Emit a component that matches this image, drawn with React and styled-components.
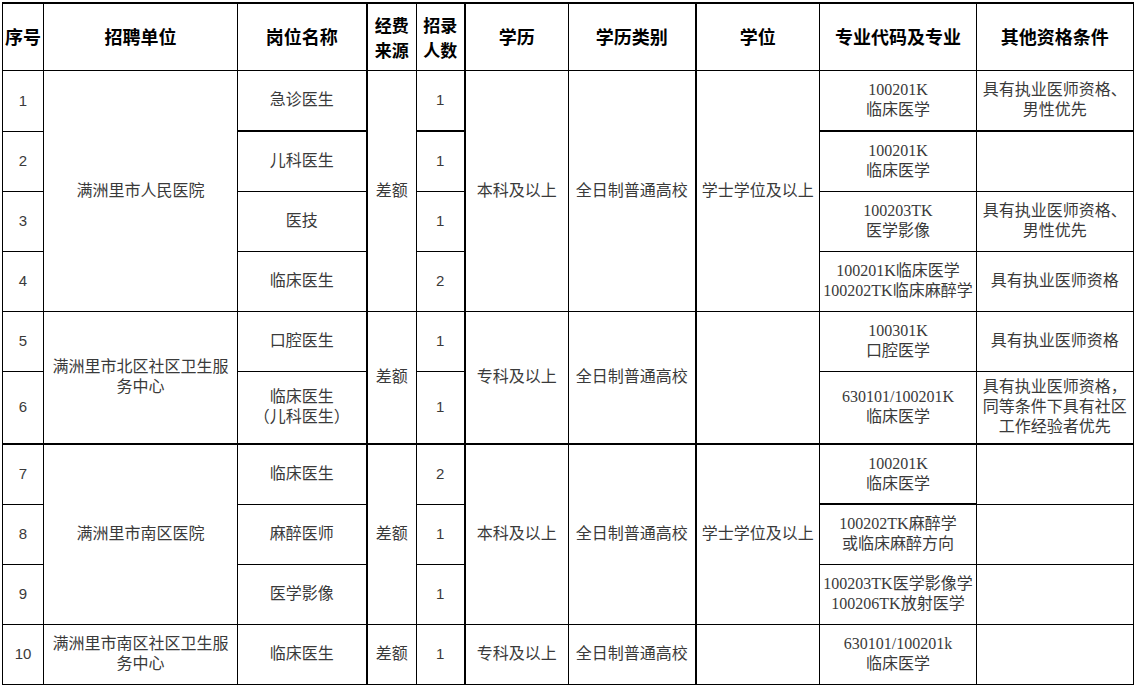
import React from "react";
import styled, { createGlobalStyle } from "styled-components";

const Global = createGlobalStyle`
  html, body { margin: 0; padding: 0; background: #fff; }
  body { font-family: "Noto Sans CJK SC", sans-serif; }
`;

const Page = styled.div`
  padding: 2px 0 0 2px;
  width: 1134px;
  box-sizing: border-box;
`;

const Table = styled.table`
  border-collapse: collapse;
  table-layout: fixed;
  width: 1131px;
  border-top: 2px solid #000;
  border-right: 2px solid #000;
`;

const Row = styled.tr`
  height: ${(p) => p.$h}px;
`;

const cellBase = `
  border: 1px solid #000;
  text-align: center;
  vertical-align: middle;
  padding: 0 2px;
  overflow: hidden;
`;

const Head = styled.th`
  ${cellBase}
  font-family: "Noto Sans CJK SC", sans-serif;
  font-weight: 700;
  font-size: 18px;
  line-height: 21px;
  color: #000;
  ${(p) => p.$tl && "border-left-width: 2px;"}
`;

const HeadStack = styled.div`
  display: flex;
  flex-direction: column;
  align-items: center;
`;

const HeadLine = styled.span`
  display: block;
  height: 25px;
  line-height: 25px;
  font-size: 17px;
`;

const Cell = styled.td`
  ${cellBase}
  font-family: "Liberation Serif", "Noto Sans CJK SC", serif;
  font-size: 16px;
  line-height: 20px;
  color: #3a3a3a;
  ${(p) => p.$tl && "border-left-width: 2px;"}
  ${(p) => p.$tt && "border-top-width: 2px;"}
`;

const NumCell = styled(Cell)`
  font-family: "Liberation Sans", "Noto Sans CJK SC", sans-serif;
  font-size: 15px;
`;

const widths = [41, 194, 129, 50, 48, 104, 127, 124, 157, 157];

const Lines = ({ t }) => {
  const parts = t.split("\n");
  return parts.map((s, i) => (
    <React.Fragment key={i}>
      {s}
      {i < parts.length - 1 && <br />}
    </React.Fragment>
  ));
};

const TwoLineHead = ({ a, b, ...rest }) => (
  <Head {...rest}>
    <HeadStack>
      <HeadLine>{a}</HeadLine>
      <HeadLine>{b}</HeadLine>
    </HeadStack>
  </Head>
);

export default function App() {
  return (
    <>
      <Global />
      <Page>
        <Table>
          <colgroup>
            {widths.map((w, i) => (
              <col key={i} style={{ width: w }} />
            ))}
          </colgroup>
          <thead>
            <Row $h={67}>
              <Head>序号</Head>
              <Head>招聘单位</Head>
              <Head>岗位名称</Head>
              <TwoLineHead $tl a="经费" b="来源" />
              <TwoLineHead a="招录" b="人数" />
              <Head $tl>学历</Head>
              <Head>学历类别</Head>
              <Head $tl>学位</Head>
              <Head>专业代码及专业</Head>
              <Head>其他资格条件</Head>
            </Row>
          </thead>
          <tbody>
            <Row $h={61}>
              <NumCell>1</NumCell>
              <Cell rowSpan={4}>满洲里市人民医院</Cell>
              <Cell>急诊医生</Cell>
              <Cell rowSpan={4} $tl>差额</Cell>
              <NumCell>1</NumCell>
              <Cell rowSpan={4} $tl>本科及以上</Cell>
              <Cell rowSpan={4}>全日制普通高校</Cell>
              <Cell rowSpan={4} $tl>学士学位及以上</Cell>
              <Cell><Lines t={"100201K\n临床医学"} /></Cell>
              <Cell>具有执业医师资格、男性优先</Cell>
            </Row>
            <Row $h={60}>
              <NumCell>2</NumCell>
              <Cell $tt>儿科医生</Cell>
              <NumCell $tt>1</NumCell>
              <Cell $tt><Lines t={"100201K\n临床医学"} /></Cell>
              <Cell $tt></Cell>
            </Row>
            <Row $h={60}>
              <NumCell>3</NumCell>
              <Cell>医技</Cell>
              <NumCell>1</NumCell>
              <Cell><Lines t={"100203TK\n医学影像"} /></Cell>
              <Cell>具有执业医师资格、男性优先</Cell>
            </Row>
            <Row $h={60}>
              <NumCell>4</NumCell>
              <Cell>临床医生</Cell>
              <NumCell>2</NumCell>
              <Cell><Lines t={"100201K临床医学\n100202TK临床麻醉学"} /></Cell>
              <Cell>具有执业医师资格</Cell>
            </Row>
            <Row $h={60}>
              <NumCell>5</NumCell>
              <Cell rowSpan={2}>满洲里市北区社区卫生服务中心</Cell>
              <Cell>口腔医生</Cell>
              <Cell rowSpan={2} $tl>差额</Cell>
              <NumCell>1</NumCell>
              <Cell rowSpan={2} $tl>专科及以上</Cell>
              <Cell rowSpan={2}>全日制普通高校</Cell>
              <Cell rowSpan={2} $tl></Cell>
              <Cell><Lines t={"100301K\n口腔医学"} /></Cell>
              <Cell>具有执业医师资格</Cell>
            </Row>
            <Row $h={73}>
              <NumCell>6</NumCell>
              <Cell><Lines t={"临床医生\n（儿科医生）"} /></Cell>
              <NumCell>1</NumCell>
              <Cell><Lines t={"630101/100201K\n临床医学"} /></Cell>
              <Cell>具有执业医师资格，同等条件下具有社区工作经验者优先</Cell>
            </Row>
            <Row $h={60}>
              <NumCell $tt>7</NumCell>
              <Cell rowSpan={3} $tt>满洲里市南区医院</Cell>
              <Cell $tt>临床医生</Cell>
              <Cell rowSpan={3} $tl $tt>差额</Cell>
              <NumCell $tt>2</NumCell>
              <Cell rowSpan={3} $tl $tt>本科及以上</Cell>
              <Cell rowSpan={3} $tt>全日制普通高校</Cell>
              <Cell rowSpan={3} $tl $tt>学士学位及以上</Cell>
              <Cell $tt><Lines t={"100201K\n临床医学"} /></Cell>
              <Cell $tt></Cell>
            </Row>
            <Row $h={60}>
              <NumCell>8</NumCell>
              <Cell>麻醉医师</Cell>
              <NumCell>1</NumCell>
              <Cell $tt><Lines t={"100202TK麻醉学\n或临床麻醉方向"} /></Cell>
              <Cell></Cell>
            </Row>
            <Row $h={60}>
              <NumCell>9</NumCell>
              <Cell>医学影像</Cell>
              <NumCell>1</NumCell>
              <Cell><Lines t={"100203TK医学影像学\n100206TK放射医学"} /></Cell>
              <Cell></Cell>
            </Row>
            <Row $h={60}>
              <NumCell>10</NumCell>
              <Cell>满洲里市南区社区卫生服务中心</Cell>
              <Cell>临床医生</Cell>
              <Cell $tl>差额</Cell>
              <NumCell>1</NumCell>
              <Cell $tl>专科及以上</Cell>
              <Cell>全日制普通高校</Cell>
              <Cell $tl></Cell>
              <Cell><Lines t={"630101/100201k\n临床医学"} /></Cell>
              <Cell></Cell>
            </Row>
          </tbody>
        </Table>
      </Page>
    </>
  );
}
